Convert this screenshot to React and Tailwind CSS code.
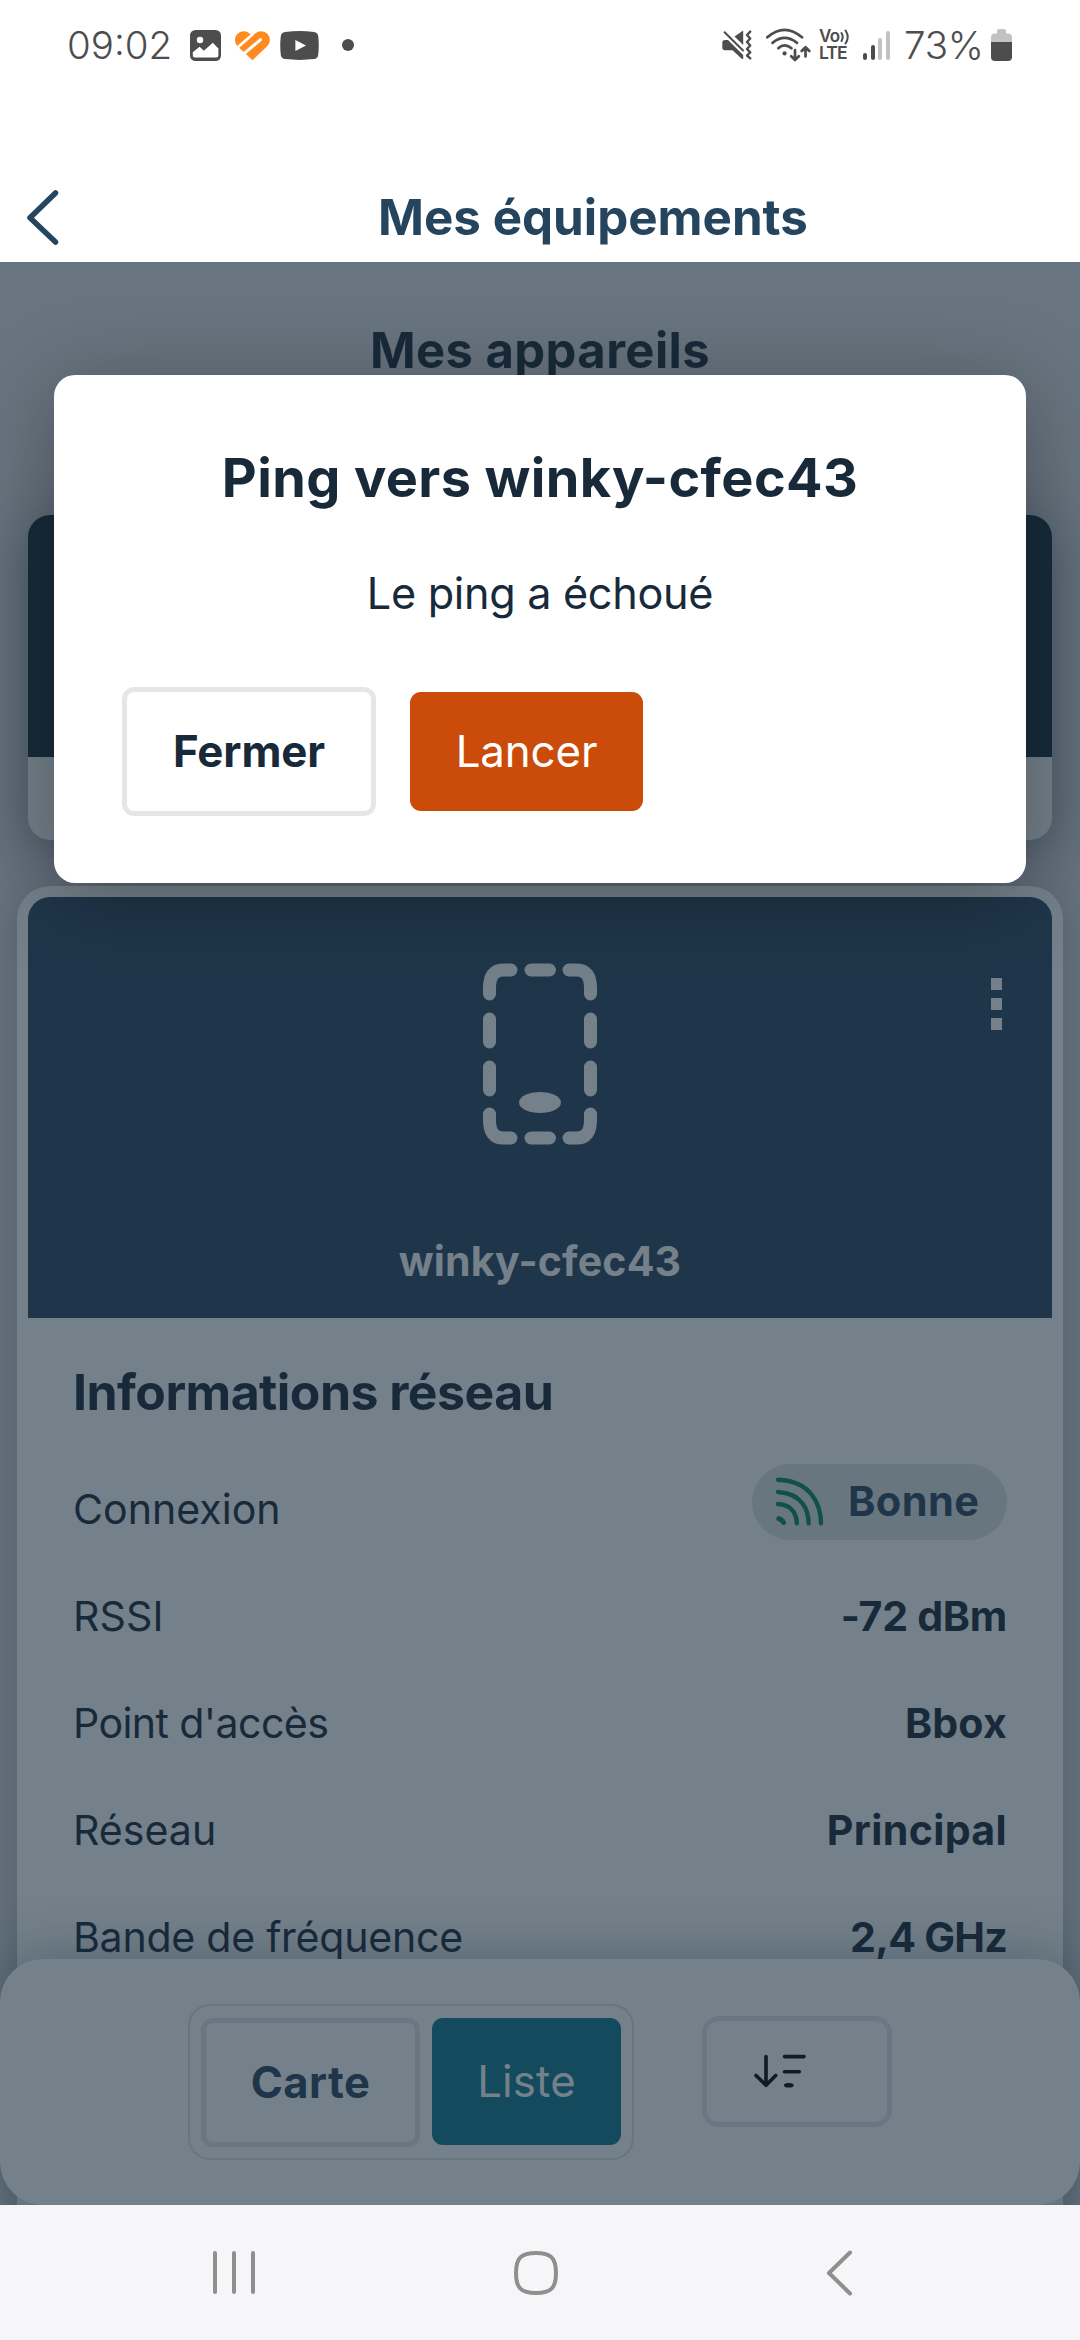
import React from "react";

const INK = "#4d4d4d";

function StatusBar() {
  return (
    <div className="flex h-[90px] shrink-0 items-center bg-white pl-[67px] pr-[68px] text-[#4d4d4d]">
      <span className="w-[120px] whitespace-nowrap text-[38.5px] font-[350] leading-none">09:02</span>
      <svg className="ml-[3px] shrink-0" width="31" height="31" viewBox="0 0 31 31">
        <rect width="31" height="31" rx="5.5" fill={INK} />
        <circle cx="10" cy="10" r="3.2" fill="#fff" />
        <path d="M2.8 22.2 L9.6 16.8 L13.9 20.8 L22.8 12.8 L28.4 18.4 V25.5 Q28.4 27.4 26.4 27.4 H4.8 Q2.8 27.4 2.8 25.5 Z" fill="#fff" />
      </svg>
      <svg className="ml-[14px] shrink-0" width="35" height="31" viewBox="235 30 35 31">
        <path
          d="M252.5 60.2 L237.6 46.2 A8.7 8.7 0 0 1 249.6 33.6 L252.4 35.6 L255.2 33.6 A8.7 8.7 0 0 1 267.4 46 Z"
          fill="#ff8a1f"
        />
        <path d="M237 48 L253 34" stroke="#fff" strokeWidth="2.8" />
        <path d="M241 56.2 L260.6 39.6" stroke="#fff" strokeWidth="3" strokeLinecap="round" />
      </svg>
      <svg className="ml-[10px] mt-px shrink-0" width="39" height="29" viewBox="0 0 39 29">
        <path d="M5 .9 Q19.500 -.7 34 .9 Q37.600 1.300 38.200 5 Q39.300 14.500 38.200 24 Q37.600 27.700 34 28.100 Q19.500 29.700 5 28.100 Q1.400 27.700 .8 24 Q-.3 14.500 .8 5 Q1.400 1.300 5 .9Z" fill={INK} />
        <path d="M15.400 9 L26 14.500 L15.400 20Z" fill="#fff" />
      </svg>
      <span className="ml-[23px] size-3 shrink-0 rounded-full bg-[#4d4d4d]" />

      <div className="ml-auto flex items-center">
        <svg width="30" height="30" viewBox="721 30 30 30" className="shrink-0">
          <path d="M721.300 42.500 Q721.300 40 724 40 H727 L742.200 55 V59 H741 L731.500 50.200 H724 Q721.300 50.200 721.300 47.500Z" fill={INK} />
          <path d="M733.500 36.600 L742.200 30.600 V45Z" fill={INK} />
          <path d="M723.600 32.200 L742 50.500" stroke={INK} strokeWidth="2" strokeLinecap="round" />
          <path d="M749.200 31.600 L746 35 L749.200 38.500 L746 42 L749.200 45.500 L746 49 L749.200 52.300 L746 55.500 L749.200 58.400" fill="none" stroke={INK} strokeWidth="2.400" strokeLinecap="round" strokeLinejoin="round" />
        </svg>
        <svg width="46" height="36" viewBox="764 27 46 36" className="ml-[13px] shrink-0">
          <g fill="none" stroke={INK} strokeWidth="2.700" strokeLinecap="round" strokeLinejoin="round">
            <path d="M766.300 37.300 Q783.500 22.300 801 37.300" />
            <path d="M771.500 42.900 Q783.500 33 796 42.900" />
            <path d="M777.300 48.200 Q783.500 42.400 790.500 48.200" />
            <path d="M794 50 V59.500 M790.200 56.300 L794 60 L797.800 56.300" />
            <path d="M804.500 56.500 V47.300 M800.700 51 L804.500 47.200 L808.300 51" />
          </g>
          <circle cx="783.600" cy="53.400" r="2.100" fill={INK} />
        </svg>
        <div className="ml-[8px] flex h-[32px] w-[33px] flex-col justify-between font-semibold leading-none">
          <div className="flex h-[15px] items-center">
            <span className="text-[17px] leading-[15px] tracking-[-0.5px]">Vo</span>
            <svg width="10" height="16" viewBox="0 0 10 16" className="shrink-0">
              <path d="M1.500 4 Q3.900 8 1.500 12 M5.500 1.500 Q10 8 5.500 14.500" fill="none" stroke={INK} strokeWidth="2" strokeLinecap="round" />
            </svg>
          </div>
          <span className="text-[17.500px] leading-[16px] tracking-[-0.900px]">LTE</span>
        </div>
        <div className="ml-[11px] flex h-[29px] items-end gap-[3.700px]">
          <span className="h-[7px] w-1 rounded-full bg-[#4d4d4d]" />
          <span className="h-[15px] w-1 rounded-full bg-[#4d4d4d]" />
          <span className="h-[22px] w-1 rounded-full bg-[#c2c2c2]" />
          <span className="h-[29px] w-1 rounded-full bg-[#c2c2c2]" />
        </div>
        <span className="ml-[14px] w-[79px] whitespace-nowrap text-[38.500px] font-[350] leading-none tracking-[-0.200px]">73%</span>
        <svg width="21" height="32" viewBox="0 0 21 32" className="ml-[8px] shrink-0">
          <path d="M6 1.500 Q6 0 8 0 H13 Q15 0 15 1.500 V4.500 H17 Q21 4.500 21 8.500 V14 H0 V8.500 Q0 4.500 4 4.500 H6Z" fill="#c2c2c2" />
          <path d="M0 13 H21 V28 Q21 32 17 32 H4 Q0 32 0 28Z" fill={INK} />
        </svg>
      </div>
    </div>
  );
}

function Header() {
  return (
    <header className="flex h-[172px] shrink-0 items-center bg-white pt-[83px]">
      <div className="w-[106px] pl-[25px]">
        <svg width="36" height="60" viewBox="0 0 36 60" fill="none" stroke="#25445e" strokeWidth="5.500" strokeLinecap="round" strokeLinejoin="round">
          <path d="M30.500 5 L5 29.700 L30.500 54" />
        </svg>
      </div>
      <h1 className="flex-1 text-center text-[49.300px] font-bold leading-none text-[#25445e]">Mes équipements</h1>
    </header>
  );
}

function DeviceIcon() {
  return (
    <svg width="116" height="184" viewBox="482 962 116 184" fill="none" stroke="#74818a" strokeLinecap="round">
      <path
        strokeWidth="13"
        strokeLinejoin="round"
        d="M489.500 994 V988 Q489.500 970 503 970 H511 M531 970 H549.500 M569 970 H577 Q590.500 970 590.500 988 V994 M489.500 1019 V1042 M590.500 1019 V1042 M489.500 1067 V1090 M590.500 1067 V1090 M489.500 1114 V1120 Q489.500 1138 503 1138 H511 M531 1138 H549.500 M569 1138 H577 Q590.500 1138 590.500 1120 V1114"
      />
      <ellipse cx="540" cy="1102.500" rx="21" ry="10.500" fill="#74818a" stroke="none" />
    </svg>
  );
}

function SignalBadge() {
  return (
    <div className="mb-[16px] flex h-[76px] w-[255px] items-center rounded-full bg-[#68767f] pl-[22px]">
      <svg width="52" height="52" viewBox="774 1476 52 52" fill="none" stroke="#12504a" strokeWidth="4.400" strokeLinecap="round">
        <path d="M778 1479.700 Q801 1480.500 812 1495 Q821 1507 821 1523.300" />
        <path d="M778 1492 Q795 1493 803 1504 Q808.600 1512 808.600 1523.300" />
        <path d="M778 1504 Q788 1504.500 793 1511 Q796.800 1516.500 796.800 1523.300" />
        <path d="M778.800 1518.600 Q782 1519.500 783.500 1522.500" strokeWidth="5" />
      </svg>
      <span className="ml-[22px] text-[41.500px] font-bold leading-none tracking-[0.400px] text-[#1f364a]">Bonne</span>
    </div>
  );
}

const ROWS = [
  { label: "RSSI", value: "-72 dBm", ls: "tracking-[0.100px]", vs: "tracking-[-0.270px]" },
  { label: "Point d'accès", value: "Bbox", ls: "tracking-[-0.600px]", vs: "tracking-[0.200px]" },
  { label: "Réseau", value: "Principal", ls: "tracking-normal", vs: "tracking-[0.350px]" },
  { label: "Bande de fréquence", value: "2,4 GHz", ls: "tracking-[-0.270px]", vs: "tracking-[-0.750px]" },
];

function DeviceCard() {
  return (
    <section className="mx-[17px] mt-[46px] h-[1400px] shrink-0 rounded-t-[33px] bg-[#74818a] pt-[11px] shadow-[0_11px_44px_rgba(20,40,60,0.300)]">
      <div className="mx-[11px] flex h-[421px] flex-col items-center rounded-t-[22px] bg-[#1f364a] pt-[65px]">
        <DeviceIcon />
        <span className="mt-[90px] text-[41.100px] font-bold leading-[50px] tracking-[0.150px] text-[#74818a]">winky-cfec43</span>
        <div className="-mt-[308px] mr-[50px] flex flex-col gap-[8.500px] self-end">
          <span className="size-[11.500px] bg-[#74818a]" />
          <span className="size-[11.500px] bg-[#74818a]" />
          <span className="size-[11.500px] bg-[#74818a]" />
        </div>
      </div>
      <div className="pl-[56px] pr-[56px] text-[#182a3a]">
        <h2 className="flex h-[138px] items-center pt-[10px] text-[50px] font-bold leading-none tracking-[-0.560px]">Informations réseau</h2>
        <div className="flex h-[107px] items-center justify-between">
          <span className="text-[41.100px]">Connexion</span>
          <SignalBadge />
        </div>
        {ROWS.map((r) => (
          <div key={r.label} className="flex h-[107px] items-center justify-between whitespace-nowrap pt-px text-[41.100px]">
            <span className={r.ls}>{r.label}</span>
            <span className={"font-bold " + r.vs}>{r.value}</span>
          </div>
        ))}
      </div>
    </section>
  );
}

function BottomSheet() {
  return (
    <div className="absolute inset-x-0 bottom-0 flex h-[246px] items-start rounded-[43px] bg-[#74818a] pl-[188px] pt-[45px] shadow-[0_0_56px_rgba(20,40,60,0.350)]">
      <div className="flex h-[156px] w-[446px] items-start gap-[12px] rounded-[22px] border-2 border-[#66757e] pl-[11px] pt-[12px]">
        <button className="h-[129px] w-[219px] rounded-[12px] border-[5px] border-[#6a7682] text-[43.500px] font-bold tracking-[0.400px] text-[#1f364a]">Carte</button>
        <button className="h-[127px] w-[189px] rounded-[11px] bg-[#134a5d] text-[43.800px] tracking-[0.140px] text-[#74818a]">Liste</button>
      </div>
      <button className="ml-[68px] mt-[12px] h-[111px] w-[190px] rounded-[17px] border-[5px] border-[#6a7682] pl-[44px]">
        <svg width="56" height="40" viewBox="751 2052 56 40" fill="none" stroke="#101b24" strokeWidth="3.600" strokeLinecap="round" strokeLinejoin="round">
          <path d="M766 2056.500 V2084 M756 2075.500 L766 2085.300 L775.700 2075.500 M784.500 2056.600 H804 M784.500 2071.800 H799.300" />
          <ellipse cx="788.800" cy="2085.300" rx="4.800" ry="2.300" fill="#101b24" stroke="none" />
        </svg>
      </button>
    </div>
  );
}

function PingDialog() {
  return (
    <div role="dialog" className="absolute left-[54px] top-[113px] h-[508px] w-[972px] rounded-[21px] bg-white text-[#182a3a] shadow-[0_14px_88px_rgba(0,0,0,0.310)]">
      <h2 className="mt-[67px] text-center text-[54px] font-bold leading-[71px] tracking-[0.400px]">Ping vers winky-cfec43</h2>
      <p className="mt-[50px] text-center text-[43.200px] leading-[61px] tracking-[-0.300px]">Le ping a échoué</p>
      <div className="mt-[63px] flex items-center gap-[34px] pl-[68px]">
        <button className="h-[129px] w-[254px] rounded-[12px] border-[5px] border-[#e5e6e7] text-[43.800px] font-bold tracking-[-0.100px]">Fermer</button>
        <button className="h-[119px] w-[233px] rounded-[11px] bg-[#cb4c0a] text-[43.800px] tracking-[-0.100px] text-white">Lancer</button>
      </div>
    </div>
  );
}

function NavBar() {
  return (
    <nav className="flex h-[135px] shrink-0 items-center justify-between bg-[#f6f6f9] pl-[213px] pr-[226px]">
      <div className="flex w-[42px] justify-between">
        <span className="h-[43px] w-[4px] rounded-full bg-[#8f8f8f]" />
        <span className="h-[43px] w-[4px] rounded-full bg-[#8f8f8f]" />
        <span className="h-[43px] w-[4px] rounded-full bg-[#8f8f8f]" />
      </div>
      <svg width="44" height="44" viewBox="0 0 44 44" className="mr-[9px]" fill="none" stroke="#8f8f8f" strokeWidth="4">
        <path d="M22 2 C37 2 42 7 42 22 C42 37 37 42 22 42 C7 42 2 37 2 22 C2 7 7 2 22 2Z" />
      </svg>
      <svg width="28" height="46" viewBox="0 0 28 46" fill="none" stroke="#8f8f8f" strokeWidth="4" strokeLinecap="round" strokeLinejoin="round">
        <path d="M24 2.500 L3 23 L24 43.500" />
      </svg>
    </nav>
  );
}

export default function App() {
  return (
    <div className="flex h-[2340px] w-[1080px] flex-col overflow-hidden font-['Inter',sans-serif]">
      <StatusBar />
      <Header />
      <main className="relative flex h-[1943px] shrink-0 flex-col overflow-hidden bg-[#68747f]">
        <h2 className="mt-[56px] shrink-0 text-center text-[49px] font-bold leading-[65px] tracking-[0.400px] text-[#182a3a]">Mes appareils</h2>
        <section className="mx-[28px] mt-[132px] h-[325px] shrink-0 rounded-[22px] bg-[#74818a] shadow-[0_11px_55px_rgba(10,30,50,0.380)]">
          <div className="h-[242px] rounded-t-[22px] bg-[#182b3b]" />
        </section>
        <DeviceCard />
        <BottomSheet />
        <PingDialog />
      </main>
      <NavBar />
    </div>
  );
}
